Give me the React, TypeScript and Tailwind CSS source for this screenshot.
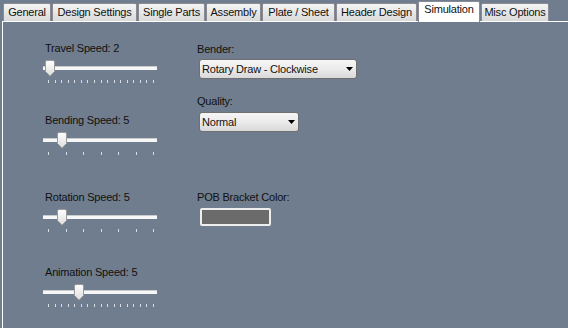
const tabs = [
  { label: "General", w: "w-[48px]" },
  { label: "Design Settings", w: "w-[85px]" },
  { label: "Single Parts", w: "w-[67px]" },
  { label: "Assembly", w: "w-[55px]" },
  { label: "Plate / Sheet", w: "w-[73px]" },
  { label: "Header Design", w: "w-[81px]" },
  { label: "Simulation", w: "w-[62px]", active: true },
  { label: "Misc Options", w: "w-[68px]" },
];

const Thumb = ({ className }: { className: string }) => (
  <svg
    width="10"
    height="17"
    viewBox="0 0 10 17"
    className={`absolute top-0 ${className}`}
  >
    <defs>
      <linearGradient id="thumbFill" x1="0" y1="0" x2="0" y2="1">
        <stop offset="0" stopColor="#ffffff" />
        <stop offset="1" stopColor="#dcdcdc" />
      </linearGradient>
    </defs>
    <path
      d="M0.5 2 Q0.5 0.5 2 0.5 H8 Q9.5 0.5 9.5 2 V11.5 L5 16.2 L0.5 11.5 Z"
      fill="url(#thumbFill)"
      stroke="#9a9a9a"
    />
  </svg>
);

type SliderProps = {
  label: string;
  thumb: string;
  ticks: number;
  className: string;
};

const Slider = ({ label, thumb, ticks, className }: SliderProps) => (
  <div className={`flex flex-col w-[114px] ${className}`}>
    <div className="h-[13px] leading-[13px] pl-[2px] whitespace-nowrap">
      {label}
    </div>
    <div className="relative h-[17px] mt-[5px]">
      <div className="absolute left-0 right-0 top-[6px] h-[4px] bg-[#f7f7f7] border-t border-[#c9cccf]" />
      <Thumb className={thumb} />
    </div>
    <div className="flex justify-between mt-[3px] ml-[5px] w-[106px] h-[3px]">
      {Array.from({ length: ticks }).map((_, i) => (
        <div key={i} className="w-px h-[3px] bg-[#d9dde2]" />
      ))}
    </div>
  </div>
);

const Combo = ({ value, w }: { value: string; w: string }) => (
  <div
    className={`flex items-center h-[20px] ml-[2px] pl-[2px] pr-[3px] border border-[#707070] rounded-[3px] bg-gradient-to-b from-[#f6f6f6] via-[#ebebeb] to-[#d9d9d9] ${w}`}
  >
    <span className="flex-1 leading-[13px] whitespace-nowrap">{value}</span>
    <svg width="7" height="4" viewBox="0 0 7 4">
      <path d="M0 0 H7 L3.5 4 Z" fill="#000" />
    </svg>
  </div>
);

export default function App() {
  return (
    <div className="w-[568px] h-[328px] overflow-hidden bg-[#6f7d8e] text-[11px] tracking-[-0.2px] text-[#111] font-['Liberation_Sans',Arial,sans-serif]">
      <div className="relative z-10 flex items-end gap-px h-[21px] pl-[3px]">
        {tabs.map((t) =>
          t.active ? (
            <div
              key={t.label}
              className={`${t.w} h-[21px] -mb-px pt-px text-center leading-[13px] bg-white border border-b-0 border-[#898c95] rounded-t-[2px] whitespace-nowrap`}
            >
              {t.label}
            </div>
          ) : (
            <div
              key={t.label}
              className={`${t.w} h-[18px] pt-[2px] text-center leading-[13px] bg-gradient-to-b from-[#f4f4f4] to-[#dadada] border border-b-0 border-[#898c95] rounded-t-[2px] whitespace-nowrap`}
            >
              {t.label}
            </div>
          )
        )}
      </div>

      <div className="flex ml-[2px] h-[307px] border-t border-l border-white">
        <div className="flex flex-col w-[194px] pl-[40px]">
          <Slider label="Travel Speed: 2" thumb="left-[2px]" ticks={17} className="mt-[20px]" />
          <Slider label="Bending Speed: 5" thumb="left-[14px]" ticks={7} className="mt-[31px]" />
          <Slider label="Rotation Speed: 5" thumb="left-[14px]" ticks={7} className="mt-[36px]" />
          <Slider label="Animation Speed: 5" thumb="left-[31px]" ticks={17} className="mt-[34px]" />
        </div>

        <div className="flex flex-col">
          <div className="mt-[21px] h-[13px] leading-[13px]">Bender:</div>
          <div className="mt-[3px]">
            <Combo value="Rotary Draw - Clockwise" w="w-[158px]" />
          </div>
          <div className="mt-[16px] h-[13px] leading-[13px]">Quality:</div>
          <div className="mt-[4px]">
            <Combo value="Normal" w="w-[100px]" />
          </div>
          <div className="mt-[59px] h-[13px] leading-[13px]">POB Bracket Color:</div>
          <div className="mt-[4px] ml-[3px] w-[71px] h-[18px] border-2 border-[#eeeeee] rounded-[2px] bg-[#6b6b6b]" />
        </div>
      </div>
    </div>
  );
}
